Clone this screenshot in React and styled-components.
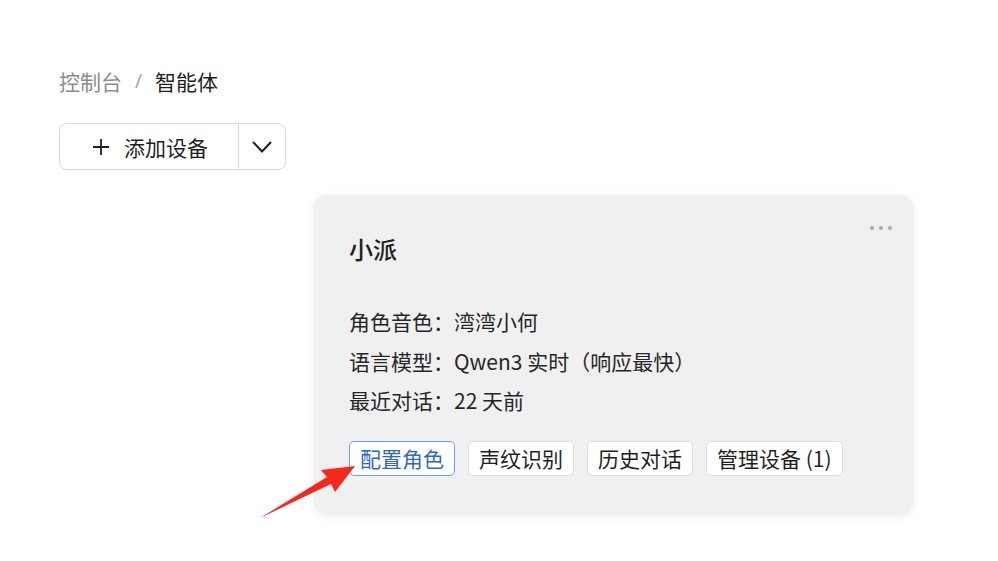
import React from 'react';
import styled, { createGlobalStyle } from 'styled-components';

const GlobalStyle = createGlobalStyle`
  html, body {
    margin: 0;
    padding: 0;
    background: #fff;
    font-family: "Noto Sans CJK SC", "Noto Sans", sans-serif;
    color: #1f1f1f;
  }
`;

const Page = styled.div`
  position: relative;
  width: 998px;
  height: 561px;
  padding: 66px 0 0 59px;
  box-sizing: border-box;
`;

const Breadcrumb = styled.div`
  display: flex;
  align-items: center;
  gap: 13px;
  font-size: 21px;
  line-height: 30px;
`;

const Crumb = styled.span`
  color: ${(p) => (p.$current ? '#1f1f1f' : '#8c8c8c')};
`;

const Sep = styled.span`
  color: #a6a6a6;
  font-family: "Noto Sans", sans-serif;
  font-size: 19px;
`;

const SplitButton = styled.div`
  display: inline-flex;
  margin-top: 27px;
  height: 47px;
  border: 1px solid #d9d9d9;
  border-radius: 8px;
  box-sizing: border-box;
  background: #fff;
  box-shadow: 0 1px 2px rgba(0, 0, 0, 0.03);
`;

const MainPart = styled.div`
  display: flex;
  align-items: center;
  gap: 13px;
  padding: 0 30px 0 31px;
  font-size: 21px;
  color: #1f1f1f;
  border-right: 1px solid #d9d9d9;
`;

const ArrowPart = styled.div`
  display: flex;
  align-items: center;
  justify-content: center;
  width: 46px;
`;

const Row = styled.div`
  display: flex;
  padding-left: 255px;
  margin-top: 25px;
`;

const Card = styled.div`
  position: relative;
  width: 599px;
  height: 319px;
  box-sizing: border-box;
  padding: 28px 35px 0 35px;
  background: #f0f0f0;
  border-radius: 12px;
  box-shadow: 0 2px 10px rgba(0, 0, 0, 0.08);
`;

const More = styled.div`
  position: absolute;
  top: 31px;
  right: 21px;
  display: flex;
  gap: 5px;
`;

const Dot = styled.span`
  width: 4px;
  height: 4px;
  border-radius: 50%;
  background: #a8a8a8;
`;

const Title = styled.div`
  font-size: 24px;
  font-weight: 500;
  line-height: 52px;
  color: #1f1f1f;
`;

const Info = styled.div`
  margin-top: 27px;
  display: flex;
  flex-direction: column;
`;

const Line = styled.div`
  font-size: 21px;
  line-height: 39.5px;
  color: #262626;
`;

const Actions = styled.div`
  display: flex;
  gap: 13px;
  margin-top: 20px;
`;

const ActionButton = styled.button`
  height: 35px;
  padding: 0 10px;
  font-family: inherit;
  font-size: 21px;
  line-height: 33px;
  border-radius: 5px;
  background: #fff;
  cursor: pointer;
  border: 1px solid ${(p) => (p.$active ? '#6ea0e6' : '#dcdcdc')};
  color: ${(p) => (p.$active ? '#2f68c4' : '#1f1f1f')};
`;

const Annotation = styled.svg`
  position: absolute;
  left: 0;
  top: 0;
  pointer-events: none;
`;

const PlusIcon = () => (
  <svg width="20" height="20" viewBox="0 0 20 20">
    <path d="M10 2v16M2 10h16" stroke="#1f1f1f" strokeWidth="1.8" />
  </svg>
);

const ChevronIcon = () => (
  <svg width="22" height="14" viewBox="0 0 22 14">
    <path d="M2 2l9 9.5L20 2" fill="none" stroke="#1f1f1f" strokeWidth="2" />
  </svg>
);

const App = () => {
  return (
    <>
      <GlobalStyle />
      <Page>
        <Breadcrumb>
          <Crumb>控制台</Crumb>
          <Sep>/</Sep>
          <Crumb $current>智能体</Crumb>
        </Breadcrumb>
        <SplitButton>
          <MainPart>
            <PlusIcon />
            添加设备
          </MainPart>
          <ArrowPart>
            <ChevronIcon />
          </ArrowPart>
        </SplitButton>
        <Row>
          <Card>
            <More>
              <Dot />
              <Dot />
              <Dot />
            </More>
            <Title>小派</Title>
            <Info>
              <Line>角色音色：湾湾小何</Line>
              <Line>语言模型：Qwen3 实时（响应最快）</Line>
              <Line>最近对话：22 天前</Line>
            </Info>
            <Actions>
              <ActionButton $active>配置角色</ActionButton>
              <ActionButton>声纹识别</ActionButton>
              <ActionButton>历史对话</ActionButton>
              <ActionButton>管理设备 (1)</ActionButton>
            </Actions>
          </Card>
        </Row>
        <Annotation width="998" height="561" viewBox="0 0 998 561">
          <path d="M260 518 L327 477 L321 470 L355 466 L335 492 L331 484 Z" fill="#f5281e" />
        </Annotation>
      </Page>
    </>
  );
};

export default App;
